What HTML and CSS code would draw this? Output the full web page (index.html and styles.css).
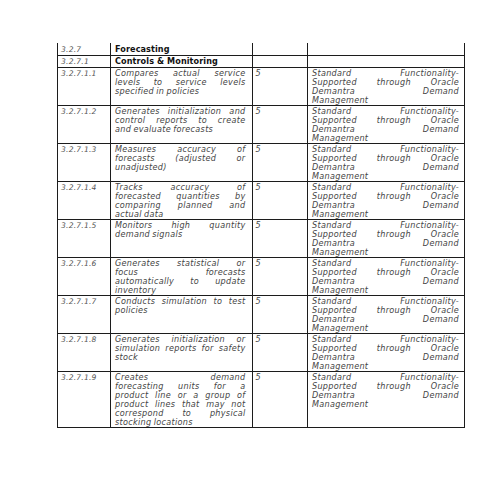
FILE: index.html
```html
<!DOCTYPE html>
<html>
<head>
<meta charset="utf-8">
<link rel="stylesheet" href="styles.css">
</head>
<body>
<div class="page">
<table class="spec">
<colgroup><col class="c1"><col class="c2"><col class="c3"><col class="c4"></colgroup>
<tr class="head first"><td class="num">3.2.7</td><td class="title">Forecasting</td><td></td><td></td></tr>
<tr class="head"><td class="num">3.2.7.1</td><td class="title">Controls &amp; Monitoring</td><td></td><td></td></tr>
<tr><td class="num">3.2.7.1.1</td><td class="desc"><div class="j">Compares actual service</div><div class="j">levels to service levels</div><div>specified in policies</div></td><td class="pri">5</td><td class="note"><div class="j">Standard Functionality-</div><div class="j">Supported through Oracle</div><div class="j">Demantra Demand</div><div>Management</div></td></tr>
<tr><td class="num">3.2.7.1.2</td><td class="desc"><div class="j">Generates initialization and</div><div class="j">control reports to create</div><div>and evaluate forecasts</div></td><td class="pri">5</td><td class="note"><div class="j">Standard Functionality-</div><div class="j">Supported through Oracle</div><div class="j">Demantra Demand</div><div>Management</div></td></tr>
<tr><td class="num">3.2.7.1.3</td><td class="desc"><div class="j">Measures accuracy of</div><div class="j">forecasts (adjusted or</div><div>unadjusted)</div></td><td class="pri">5</td><td class="note"><div class="j">Standard Functionality-</div><div class="j">Supported through Oracle</div><div class="j">Demantra Demand</div><div>Management</div></td></tr>
<tr><td class="num">3.2.7.1.4</td><td class="desc"><div class="j">Tracks accuracy of</div><div class="j">forecasted quantities by</div><div class="j">comparing planned and</div><div>actual data</div></td><td class="pri">5</td><td class="note"><div class="j">Standard Functionality-</div><div class="j">Supported through Oracle</div><div class="j">Demantra Demand</div><div>Management</div></td></tr>
<tr><td class="num">3.2.7.1.5</td><td class="desc"><div class="j">Monitors high quantity</div><div>demand signals</div></td><td class="pri">5</td><td class="note"><div class="j">Standard Functionality-</div><div class="j">Supported through Oracle</div><div class="j">Demantra Demand</div><div>Management</div></td></tr>
<tr><td class="num">3.2.7.1.6</td><td class="desc"><div class="j">Generates statistical or</div><div class="j">focus forecasts</div><div class="j">automatically to update</div><div>inventory</div></td><td class="pri">5</td><td class="note"><div class="j">Standard Functionality-</div><div class="j">Supported through Oracle</div><div class="j">Demantra Demand</div><div>Management</div></td></tr>
<tr><td class="num">3.2.7.1.7</td><td class="desc"><div class="j">Conducts simulation to test</div><div>policies</div></td><td class="pri">5</td><td class="note"><div class="j">Standard Functionality-</div><div class="j">Supported through Oracle</div><div class="j">Demantra Demand</div><div>Management</div></td></tr>
<tr><td class="num">3.2.7.1.8</td><td class="desc"><div class="j">Generates initialization or</div><div class="j">simulation reports for safety</div><div>stock</div></td><td class="pri">5</td><td class="note"><div class="j">Standard Functionality-</div><div class="j">Supported through Oracle</div><div class="j">Demantra Demand</div><div>Management</div></td></tr>
<tr><td class="num">3.2.7.1.9</td><td class="desc"><div class="j">Creates demand</div><div class="j">forecasting units for a</div><div class="j">product line or a group of</div><div class="j">product lines that may not</div><div class="j">correspond to physical</div><div>stocking locations</div></td><td class="pri">5</td><td class="note"><div class="j">Standard Functionality-</div><div class="j">Supported through Oracle</div><div class="j">Demantra Demand</div><div>Management</div></td></tr>
</table>
</div>
</body>
</html>
```

FILE: styles.css
```css
html, body {
  margin: 0;
  padding: 0;
  background: #ffffff;
}
.page {
  padding: 43px 0 0 57px;
}
.spec {
  border-collapse: collapse;
  table-layout: fixed;
  width: 408px;
  font-family: "DejaVu Sans", "Liberation Sans", sans-serif;
  font-size: 8.1px;
  line-height: 9px;
  letter-spacing: 0.3px;
  word-spacing: -0.6px;
  color: #444444;
  font-style: italic;
}
.c1 { width: 53px; }
.c2 { width: 141.5px; }
.c3 { width: 55.5px; }
.c4 { width: 157px; }
.spec td {
  border: 1px solid #1c1c1c;
  vertical-align: top;
  padding: 1px 5px 0 4px;
  overflow: hidden;
}
.spec tr.head td {
  padding-top: 1px;
  padding-bottom: 1px;
}
.spec tr.first td {
  border-top: none;
  padding-top: 2px;
}
.spec td.num {
  padding-left: 3px;
  color: #555555;
  font-size: 7.6px;
  letter-spacing: 0.2px;
}
.spec td.title {
  font-weight: bold;
  font-style: normal;
  color: #111111;
  font-size: 8.1px;
  letter-spacing: 0.1px;
  word-spacing: 0;
}
.spec td.desc {
  padding-right: 6px;
}
.spec td.pri {
  padding-left: 3px;
}
.j {
  text-align: justify;
  text-align-last: justify;
}
```
